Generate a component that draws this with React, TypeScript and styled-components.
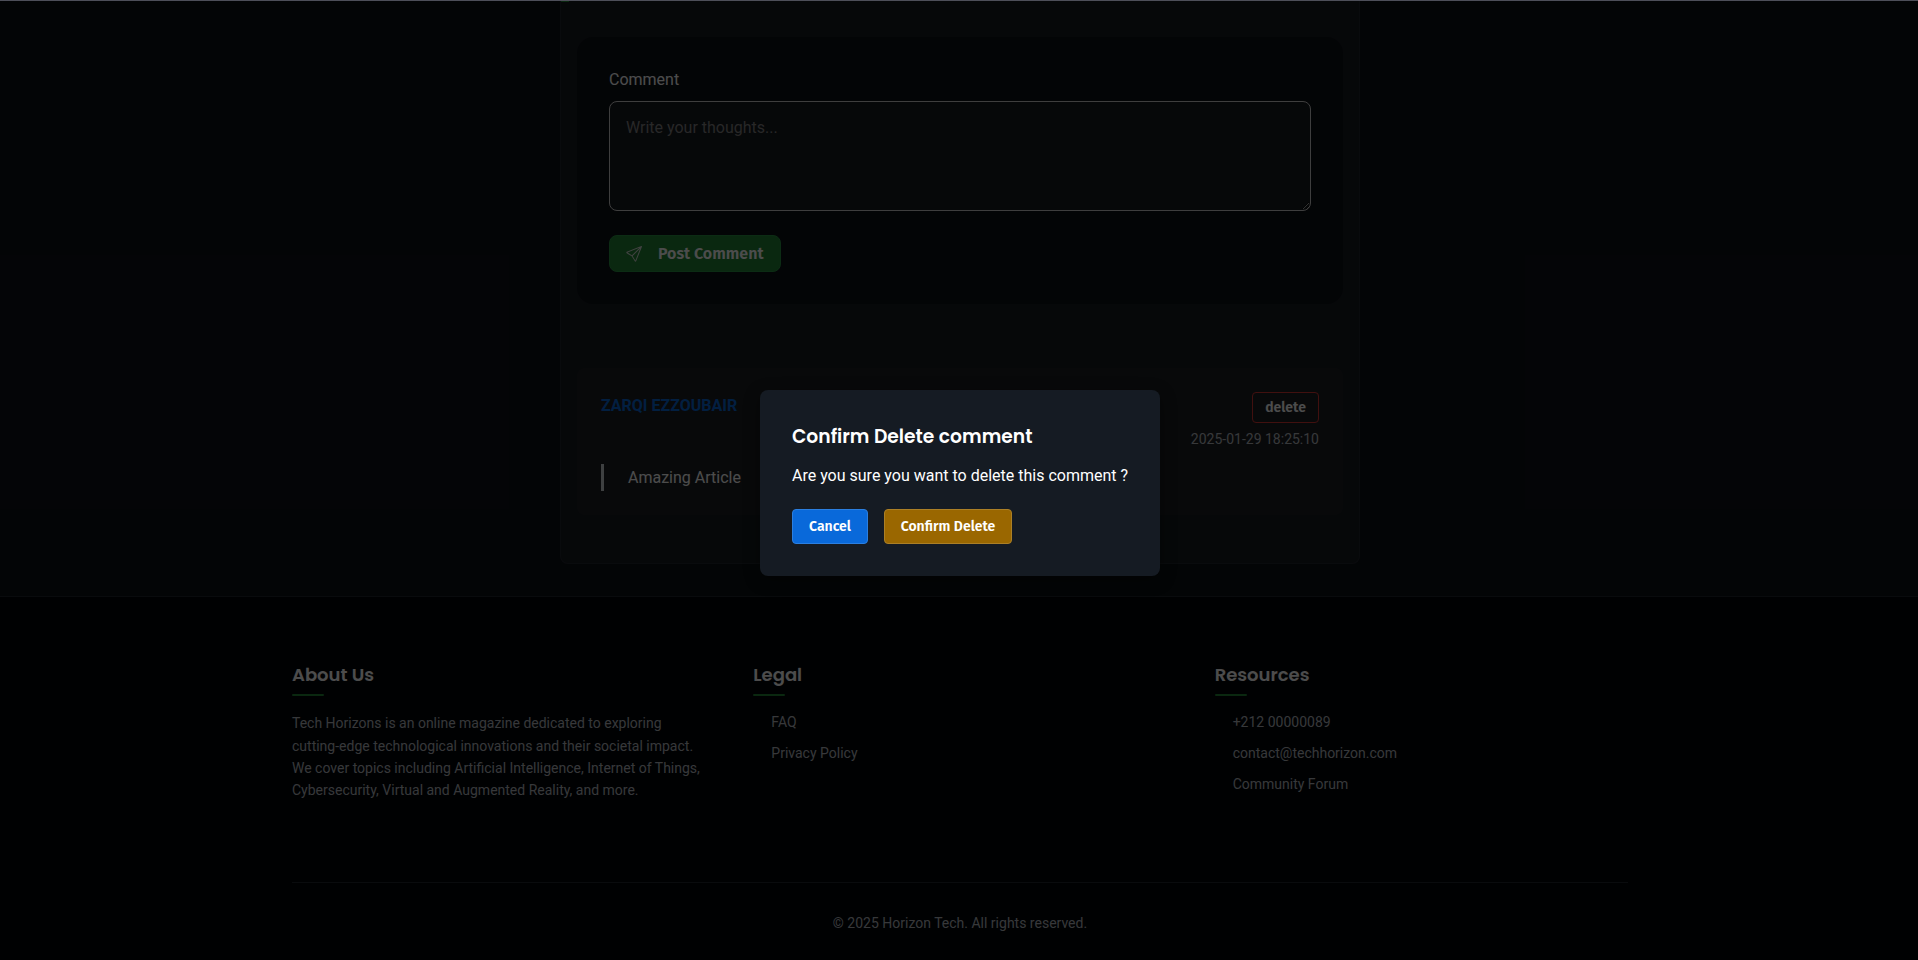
import React from "react";
import styled, { createGlobalStyle } from "styled-components";

const Global = createGlobalStyle`
  *, *::before, *::after { box-sizing: border-box; }
  html, body { margin: 0; padding: 0; }
  body {
    background: #0d1117;
    color: #fff;
    font-family: Roboto, "Liberation Sans", sans-serif;
    font-size: 16px;
    height: 960px;
    overflow: hidden;
  }
  h3, h4, p, ul { margin: 0; padding: 0; }
  ul { list-style: none; }
`;

const headingFont = `Poppins, Inter, sans-serif`;
const buttonFont = `"Fira Sans", "Noto Sans", sans-serif`;
const muted = "#b8bcc1";

const Page = styled.div`
  width: 1920px;
  height: 960px;
  display: flex;
  flex-direction: column;
  align-items: center;
  overflow: hidden;
`;

const Article = styled.main`
  flex: none;
  width: 800px;
  height: 564px;
  padding: 0 16px;
  border: 1px solid #21262d;
  border-top: 0;
  border-radius: 0 0 8px 8px;
  background: #171b20;
`;

const ProgressMark = styled.div`
  width: 8px;
  height: 2px;
  margin: 0 0 35px -16px;
  background: #238636;
`;

const Form = styled.form`
  height: 267px;
  padding: 33px 32px 32px;
  border-radius: 16px;
  background: #0d1117;
`;

const Label = styled.label`
  display: block;
  line-height: 19px;
  margin-bottom: 12px;
`;

const TextArea = styled.textarea`
  display: block;
  width: 100%;
  height: 110px;
  padding: 16px;
  border: 1px solid #d1d1d1;
  border-radius: 8px;
  background: #161b20;
  color: #fff;
  font: 16px/19px Roboto, sans-serif;
  resize: vertical;
  &::placeholder { color: #858585; }
`;

const PostButton = styled.button`
  display: flex;
  align-items: center;
  gap: 16px;
  width: 172px;
  height: 37px;
  margin-top: 24px;
  padding: 0 16px;
  border: 1px solid #2a9344;
  border-radius: 8px;
  background: #238636;
  color: #fff;
  font: 600 16px ${buttonFont};
  white-space: nowrap;
  svg { flex: none; }
`;

const Comment = styled.section`
  height: 147px;
  margin-top: 64px;
  padding: 24px;
  border-radius: 8px;
  background: #1d2024;
`;

const CommentHead = styled.header`
  display: flex;
  justify-content: space-between;
  height: 72px;
`;

const Author = styled.span`
  padding-top: 4px;
  line-height: 20px;
  font-weight: 700;
  color: #0969da;
`;

const Meta = styled.div`
  display: flex;
  flex-direction: column;
  align-items: flex-end;
`;

const DeleteButton = styled.button`
  width: 67px;
  height: 31px;
  padding: 0;
  border: 1px solid #da3633;
  border-radius: 4px;
  background: transparent;
  color: #fff;
  font: 600 14px ${buttonFont};
`;

const DateText = styled.time`
  margin-top: 6px;
  font-size: 14px;
  line-height: 20px;
  color: ${muted};
`;

const Quote = styled.p`
  height: 27px;
  padding-left: 24px;
  border-left: 3px solid #d1d5da;
  line-height: 28px;
`;

const Footer = styled.footer`
  flex: none;
  display: flex;
  flex-direction: column;
  align-items: center;
  width: 100%;
  height: 364px;
  margin-top: 32px;
  border-top: 1px solid #21262d;
  background: #010409;
`;

const Columns = styled.div`
  display: grid;
  grid-template-columns: repeat(3, minmax(0, 1fr));
  gap: 48px;
  width: 1336px;
  height: 285px;
  padding-top: 64px;
`;

const ColumnTitle = styled.h4`
  height: 35px;
  margin-bottom: 16px;
  font: 600 18px/28px ${headingFont};
  &::after {
    content: "";
    display: block;
    width: 32px;
    height: 2px;
    margin-top: 5px;
    border-radius: 2px;
    background: #238636;
  }
`;

const About = styled.p`
  padding-top: 0.2px;
  font-size: 14px;
  line-height: 22.4px;
  color: ${muted};
`;

const Links = styled.ul`
  padding-left: 18px;
  li {
    height: 31px;
    line-height: 20px;
    font-size: 14px;
    color: ${muted};
  }
`;

const Copyright = styled.div`
  width: 1336px;
  padding-top: 30px;
  border-top: 1px solid #21262d;
  text-align: center;
  font-size: 14px;
  line-height: 20px;
  color: ${muted};
`;

const Backdrop = styled.div`
  position: absolute;
  top: 0;
  left: 0;
  width: 1920px;
  height: 960px;
  padding-top: 6px;
  display: flex;
  align-items: center;
  justify-content: center;
  background: rgba(0, 0, 0, 0.7);
`;

const TopLine = styled.div`
  position: absolute;
  top: 0;
  left: 0;
  width: 1920px;
  height: 1px;
  background: #4d4f59;
`;

const Modal = styled.div`
  width: 400px;
  height: 186px;
  padding: 32px;
  border-radius: 8px;
  background: #151b23;
  box-shadow: 0 4px 16px rgba(0, 0, 0, 0.4);
`;

const ModalTitle = styled.h3`
  font: 600 18.72px/30px ${headingFont};
  white-space: nowrap;
`;

const ModalText = styled.p`
  margin-top: 14px;
  line-height: 20px;
  white-space: nowrap;
`;

const Actions = styled.div`
  display: flex;
  gap: 16px;
  margin-top: 23px;
`;

const ActionButton = styled.button<{ $bg: string; $border: string; $width: number }>`
  width: ${(p) => p.$width}px;
  height: 35px;
  padding: 0;
  border: 1px solid ${(p) => p.$border};
  border-radius: 4px;
  background: ${(p) => p.$bg};
  color: #fff;
  font: 600 14px ${buttonFont};
  white-space: nowrap;
`;

const SendIcon = () => (
  <svg width="16" height="16" viewBox="0 0 16 16" fill="#d8dcd9">
    <path d="M15.854.146a.5.5 0 0 1 .11.54l-5.819 14.547a.75.75 0 0 1-1.329.124l-3.178-4.995L.643 7.184a.75.75 0 0 1 .124-1.33L15.314.037a.5.5 0 0 1 .54.11ZM6.636 10.07l2.761 4.338L14.13 2.576zm6.787-8.201L1.591 6.602l4.339 2.76z" />
  </svg>
);

export default function App() {
  return (
    <>
      <Global />
      <Page>
        <Article>
          <ProgressMark />
          <Form>
            <Label htmlFor="comment">Comment</Label>
            <TextArea id="comment" placeholder="Write your thoughts..." />
            <PostButton type="button">
              <SendIcon />
              Post Comment
            </PostButton>
          </Form>
          <Comment>
            <CommentHead>
              <Author>ZARQI EZZOUBAIR</Author>
              <Meta>
                <DeleteButton>delete</DeleteButton>
                <DateText>2025-01-29 18:25:10</DateText>
              </Meta>
            </CommentHead>
            <Quote>Amazing Article</Quote>
          </Comment>
        </Article>
        <Footer>
          <Columns>
            <div>
              <ColumnTitle>About Us</ColumnTitle>
              <About>
                Tech Horizons is an online magazine dedicated to exploring
                cutting-edge technological innovations and their societal impact.
                We cover topics including Artificial Intelligence, Internet of Things,
                Cybersecurity, Virtual and Augmented Reality, and more.
              </About>
            </div>
            <div>
              <ColumnTitle>Legal</ColumnTitle>
              <Links>
                <li>FAQ</li>
                <li>Privacy Policy</li>
              </Links>
            </div>
            <div>
              <ColumnTitle>Resources</ColumnTitle>
              <Links>
                <li>+212 00000089</li>
                <li>contact@techhorizon.com</li>
                <li>Community Forum</li>
              </Links>
            </div>
          </Columns>
          <Copyright>© 2025 Horizon Tech. All rights reserved.</Copyright>
        </Footer>
      </Page>
      <Backdrop>
        <Modal>
          <ModalTitle>Confirm Delete comment</ModalTitle>
          <ModalText>Are you sure you want to delete this comment ?</ModalText>
          <Actions>
            <ActionButton $bg="#0969da" $border="#2b7fe0" $width={76}>
              Cancel
            </ActionButton>
            <ActionButton $bg="#9a6700" $border="#ab7f26" $width={128}>
              Confirm Delete
            </ActionButton>
          </Actions>
        </Modal>
      </Backdrop>
      <TopLine />
    </>
  );
}
